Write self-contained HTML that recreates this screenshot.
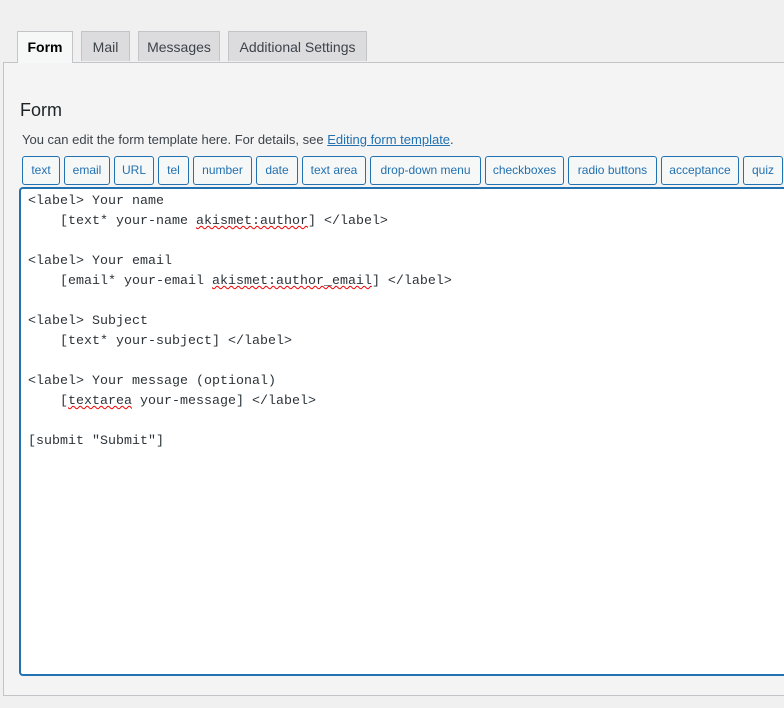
<!DOCTYPE html>
<html><head><style>
body{margin:0;width:784px;height:708px;background:#f0f0f1;font-family:"Liberation Sans",sans-serif;position:relative;overflow:hidden}
.tab{position:absolute;top:31px;height:30px;border:1px solid #c3c4c7;border-bottom:none;background:#dcdcde;font-size:14px;color:#3c434a;line-height:30px;text-align:center;box-sizing:border-box}
.tab.on{background:#f6f7f7;height:32px;color:#000;font-weight:bold;z-index:2}
.panel{position:absolute;left:3px;top:62px;width:800px;height:634px;border:1px solid #c3c4c7;background:#f4f4f4;box-sizing:border-box}
h2{position:absolute;left:20px;top:100px;margin:0;font-weight:normal;font-size:18px;color:#1d2327}
.desc{position:absolute;left:22px;top:132px;font-size:13px;color:#3c434a}
.desc a{color:#2271b1}
.b{position:absolute;top:156px;height:29px;border:1px solid #2271b1;border-radius:3px;background:#f6f7f7;color:#2271b1;font-size:12px;line-height:27px;text-align:center;box-sizing:border-box}
.ta{position:absolute;left:19px;top:187px;width:800px;height:489px;border:2px solid #2271b1;border-radius:4px;background:#fff;box-sizing:border-box}
pre{position:absolute;left:28px;top:192px;margin:0;font-family:"Liberation Mono",monospace;font-size:13.33px;line-height:20px;color:#2c3338}
.u{text-decoration:underline wavy #e00;text-decoration-thickness:1px}
</style></head><body>
<div class="panel"></div>
<div class="tab on" style="left:17px;width:56px">Form</div>
<div class="tab" style="left:81px;width:49px">Mail</div>
<div class="tab" style="left:138px;width:82px">Messages</div>
<div class="tab" style="left:228px;width:139px">Additional Settings</div>
<h2>Form</h2>
<div class="desc">You can edit the form template here. For details, see <a href="#">Editing form template</a>.</div>
<div class="b" style="left:22px;width:38px">text</div>
<div class="b" style="left:64px;width:46px">email</div>
<div class="b" style="left:114px;width:40px">URL</div>
<div class="b" style="left:158px;width:31px">tel</div>
<div class="b" style="left:193px;width:59px">number</div>
<div class="b" style="left:256px;width:42px">date</div>
<div class="b" style="left:302px;width:64px">text area</div>
<div class="b" style="left:370px;width:111px">drop-down menu</div>
<div class="b" style="left:485px;width:79px">checkboxes</div>
<div class="b" style="left:568px;width:89px">radio buttons</div>
<div class="b" style="left:661px;width:78px">acceptance</div>
<div class="b" style="left:743px;width:40px">quiz</div>
<div class="ta"></div>
<pre>&lt;label&gt; Your name
    [text* your-name <span class="u">akismet:author</span>] &lt;/label&gt;

&lt;label&gt; Your email
    [email* your-email <span class="u">akismet:author_email</span>] &lt;/label&gt;

&lt;label&gt; Subject
    [text* your-subject] &lt;/label&gt;

&lt;label&gt; Your message (optional)
    [<span class="u">textarea</span> your-message] &lt;/label&gt;

[submit "Submit"]</pre>
</body></html>
